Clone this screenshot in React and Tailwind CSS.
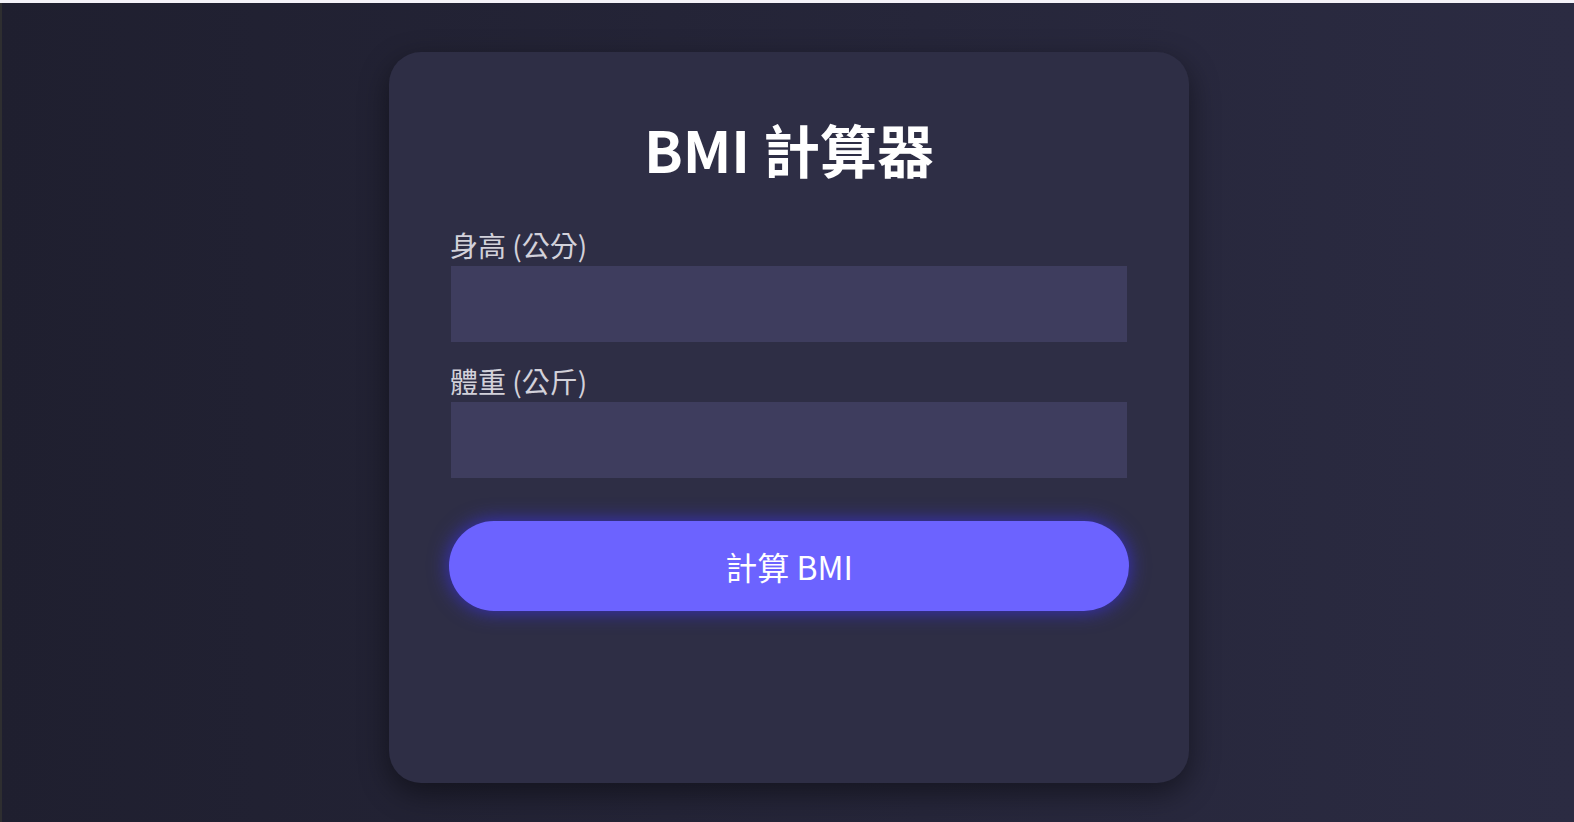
const font = { fontFamily: '"Noto Sans CJK TC", "Noto Sans", sans-serif' }

const Field = ({ label, className = '' }) => (
  <div className={className}>
    <label className="block text-[28px] leading-[34px] text-[#d2d1da] mb-[4px] pl-[1px]">{label}</label>
    <input
      type="number"
      className="block w-[676px] mx-auto h-[76px] bg-[#3e3d5e] text-white text-2xl px-4 outline-none"
    />
  </div>
)

export default function App() {
  return (
    <div className="min-h-screen flex flex-col bg-gradient-to-r from-[#1f1f2f] to-[#2b2b42]" style={font}>
      {/* top strip */}
      <div className="h-[3px] bg-[#f4f2f8]" />
      <div className="flex flex-1">
        <div className="w-[2px] bg-[#2e2e30]" />
        <div className="flex-1 pt-[49px] pb-[39px]">
          <div className="w-[800px] h-[731px] ml-[387px] rounded-[32px] bg-[#2e2e45] shadow-[0_10px_30px_rgba(0,0,0,0.45)] px-[60px] pt-[63px]">
            <h1 className="text-center text-[57px] leading-[67px] font-bold text-white">BMI 計算器</h1>
            <Field label="身高 (公分)" className="mt-[46px]" />
            <Field label="體重 (公斤)" className="mt-[22px]" />
            <button
              type="button"
              className="mt-[43px] w-full h-[90px] rounded-full bg-[#6c63ff] text-white text-[32px] shadow-[0_0_20px_rgba(60,50,230,0.8)]"
            >
              計算 BMI
            </button>
          </div>
        </div>
      </div>
    </div>
  )
}
